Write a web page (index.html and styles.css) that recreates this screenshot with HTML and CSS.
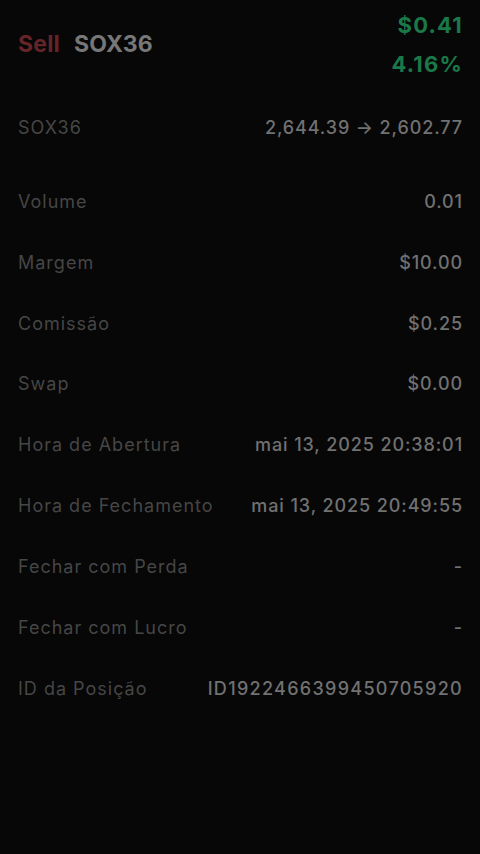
FILE: index.html
```html
<!DOCTYPE html>
<html lang="pt">
<head>
<meta charset="utf-8">
<link rel="stylesheet" href="styles.css">
</head>
<body>
<div class="sheet">
  <header class="head">
    <div class="title"><span class="side">Sell</span><span class="sym">SOX36</span></div>
    <div class="pnl"><span>$0.41</span><span>4.16%</span></div>
  </header>
  <div class="row price"><span class="lbl">SOX36</span><span class="val">2,644.39 → 2,602.77</span></div>
  <div class="list">
    <div class="row"><span class="lbl">Volume</span><span class="val">0.01</span></div>
    <div class="row"><span class="lbl">Margem</span><span class="val">$10.00</span></div>
    <div class="row"><span class="lbl">Comissão</span><span class="val">$0.25</span></div>
    <div class="row"><span class="lbl">Swap</span><span class="val">$0.00</span></div>
    <div class="row"><span class="lbl">Hora de Abertura</span><span class="val">mai 13, 2025 20:38:01</span></div>
    <div class="row"><span class="lbl">Hora de Fechamento</span><span class="val">mai 13, 2025 20:49:55</span></div>
    <div class="row"><span class="lbl">Fechar com Perda</span><span class="val">-</span></div>
    <div class="row"><span class="lbl">Fechar com Lucro</span><span class="val">-</span></div>
    <div class="row"><span class="lbl">ID da Posição</span><span class="val id">ID1922466399450705920</span></div>
  </div>
</div>
</body>
</html>
```
FILE: styles.css
```css
html, body {
  margin: 0;
  padding: 0;
  background: #000;
  font-family: Inter, "Noto Sans", sans-serif;
}
.sheet {
  width: 480px;
  height: 854px;
  box-sizing: border-box;
  padding: 0 18px;
  background: #070707;
}
.head {
  display: flex;
  justify-content: space-between;
  align-items: center;
  height: 88px;
}
.title {
  display: flex;
  gap: 14px;
  font-size: 23px;
  font-weight: 700;
  letter-spacing: 0.2px;
}
.side { color: #652427; }
.sym { color: #777777; }
.pnl {
  display: flex;
  flex-direction: column;
  align-items: flex-end;
  gap: 11px;
  font-size: 22px;
  font-weight: 700;
  color: #1b7849;
  line-height: 28px;
  letter-spacing: 1.2px;
  margin-right: -1px;
  margin-top: 1px;
}
.list { margin-top: 5px; }
.row {
  display: flex;
  justify-content: space-between;
  align-items: center;
  height: 60.85px;
  font-size: 18px;
}
.price { height: 78px; }
.lbl { color: #464646; letter-spacing: 1px; }
.val { color: #717171; font-weight: 500; letter-spacing: 0.9px; margin-right: -1px; }
.val.id { letter-spacing: 1.3px; }
```
